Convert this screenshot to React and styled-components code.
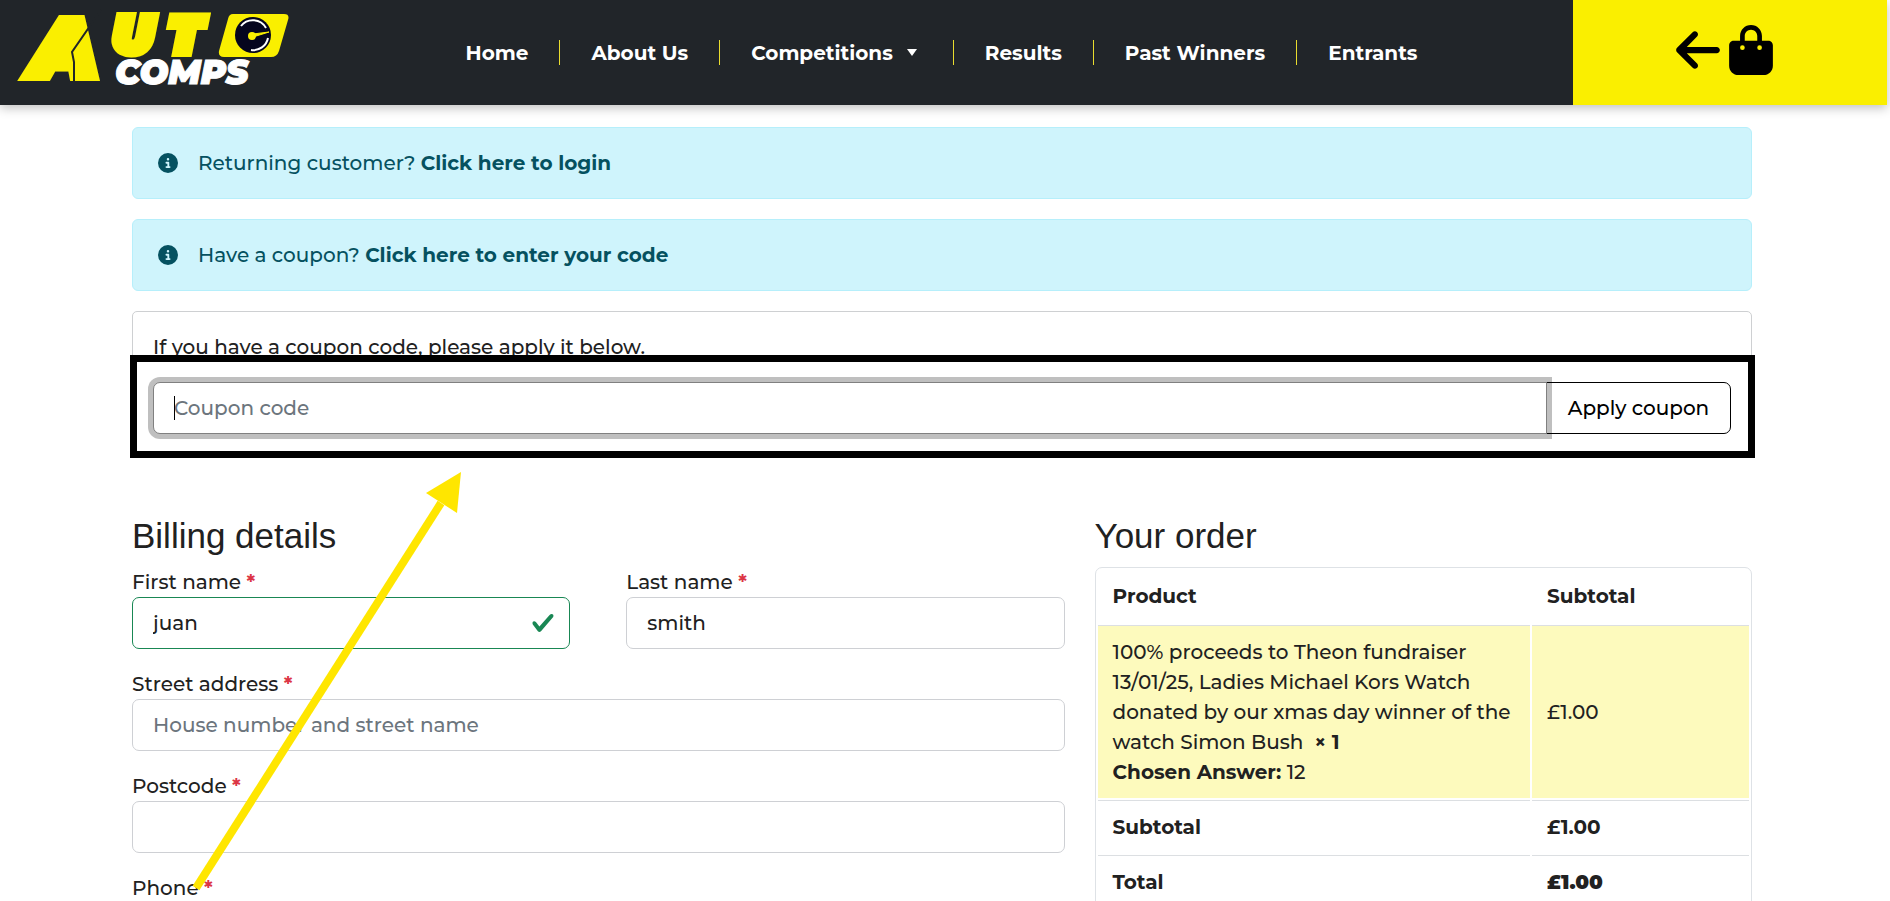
import React from "react";
import styled, { createGlobalStyle } from "styled-components";
import { FaArrowLeft, FaBagShopping, FaCircleInfo } from "react-icons/fa6";

const GlobalStyle = createGlobalStyle`
  *, *::before, *::after { box-sizing: border-box; }
  body {
    margin: 0;
    background: #fff;
    color: #212121;
    font-family: Montserrat, Inter, "Liberation Sans", sans-serif;
    font-size: 20px;
    font-weight: 500;
    line-height: 30px;
  }
  input, button { font: inherit; color: inherit; }
  strong { font-weight: 700; }
`;

const Page = styled.div`
  height: 100vh;
  overflow-x: hidden;
  overflow-y: auto;
  scrollbar-width: none;
`;

const Header = styled.header`
  display: grid;
  grid-template-columns: 1fr 4fr 1fr;
  height: 105px;
  margin-right: 3px;
  background: #212529;
  box-shadow: 0 3px 10px rgba(0, 0, 0, 0.25);
`;

const LogoLink = styled.a`
  display: block;
  svg {
    display: block;
  }
`;

const Nav = styled.nav`
  display: flex;
  align-items: center;
  justify-content: center;
  padding-right: 4px;
`;

const NavLink = styled.a`
  display: flex;
  align-items: center;
  gap: 14px;
  padding: 0 31px;
  height: 25px;
  color: #fff;
  font-weight: 700;
  text-decoration: none;
  white-space: nowrap;
  & + & {
    border-left: 1px solid #e9dc2e;
  }
`;

const Caret = styled.span`
  margin-right: 5px;
  border: 5px solid transparent;
  border-top: 7px solid #fff;
  border-bottom: 0;
`;

const HeaderActions = styled.div`
  display: flex;
  align-items: center;
  justify-content: center;
  gap: 9px;
  padding: 0 10px 5px 0;
  background: #faef00;
`;

const IconLink = styled.a`
  display: block;
  color: #000;
  svg {
    display: block;
    width: 44px;
    height: 50px;
  }
`;

const Main = styled.main`
  padding: 22px 138px 40px 132px;
`;

const Notice = styled.div`
  display: flex;
  align-items: center;
  gap: 20px;
  height: 72px;
  margin-bottom: 20px;
  padding: 0 25px;
  border: 1px solid #b6effb;
  border-radius: 6px;
  background: #cff4fc;
  color: #055160;
  a {
    color: inherit;
    font-weight: 700;
    text-decoration: none;
  }
`;

const CouponForm = styled.form`
  position: relative;
  padding: 20px;
  border: 1px solid #ced0d2;
  border-radius: 5px;
  p {
    margin: 0 0 20px;
  }
`;

const InputGroup = styled.div`
  position: relative;
  display: flex;
`;

const TextInput = styled.input`
  display: block;
  width: 100%;
  height: 52px;
  padding: 0 20px;
  border: 1px solid ${(p) => (p.$valid ? "#198754" : "#ced0d4")};
  border-radius: 7px;
  background: #fff;
  outline: 0;
  &::placeholder {
    color: #6c757d;
    opacity: 1;
  }
`;

const CouponInput = styled(TextInput)`
  position: relative;
  z-index: 1;
  flex: 1;
  min-width: 0;
  border-color: #808080;
  border-radius: 7px 0 0 7px;
  box-shadow: 0 0 0 5px rgba(0, 0, 0, 0.25);
  caret-color: transparent;
`;

const TextCaret = styled.span`
  position: absolute;
  z-index: 2;
  left: 21px;
  top: 14px;
  width: 1px;
  height: 24px;
  background: #000;
`;

const ApplyButton = styled.button`
  width: 185px;
  height: 52px;
  margin-left: -1px;
  padding: 0;
  border: 1px solid #000;
  border-radius: 0 7px 7px 0;
  background: #fff;
  color: #000;
  white-space: nowrap;
`;

const Highlight = styled.div`
  position: absolute;
  z-index: 3;
  inset: 43px -4px -4px -3px;
  border: 7px solid #000;
  pointer-events: none;
`;

const Columns = styled.div`
  display: grid;
  grid-template-columns: repeat(12, 1fr);
  column-gap: 30px;
  margin-top: 60px;
`;

const Billing = styled.section`
  position: relative;
  grid-column: span 7;
`;

const Order = styled.section`
  grid-column: span 5;
`;

const Heading = styled.h3`
  margin: 0 0 10px;
  font-family: "Liberation Sans", Arial, sans-serif;
  font-size: 35px;
  font-weight: 400;
  line-height: 42px;
`;

const FieldRow = styled.div`
  display: grid;
  grid-auto-flow: column;
  grid-auto-columns: 1fr;
  gap: 56px;
  margin-bottom: 20px;
`;

const FieldBox = styled.div`
  position: relative;
  label {
    display: block;
  }
`;

const Required = styled.abbr`
  color: #dc3545;
  font-weight: 700;
`;

const CheckMark = styled.svg`
  position: absolute;
  right: 15px;
  bottom: 14px;
  width: 24px;
  height: 24px;
`;

const Pointer = styled.svg`
  position: absolute;
  left: 60px;
  top: -45px;
  width: 280px;
  height: 430px;
  pointer-events: none;
`;

const OrderTable = styled.table`
  width: 100%;
  border: 1px solid #dee2e6;
  border-radius: 7px;
  border-collapse: separate;
  border-spacing: 2px;
  text-align: left;
  th,
  td {
    padding: 11px 15px;
    border-top: 1px solid #dcdfe2;
  }
  th:last-child,
  td:last-child {
    width: 217px;
  }
  thead th {
    border-top: 0;
    padding-bottom: 12px;
  }
`;

const ItemRow = styled.tr`
  td {
    background: #fdfabd;
  }
`;

const Amount = styled.td`
  font-weight: ${(p) => p.$weight};
`;

function Logo() {
  return (
    <svg width="314" height="105" viewBox="0 0 314 105" role="img" aria-label="Auto Comps">
      <g
        fill="#faef00"
        stroke="#faef00"
        fontFamily="Montserrat, DejaVu Sans, sans-serif"
        fontWeight="900"
        fontStyle="italic"
      >
        <text x="33" y="76" fontSize="78" strokeWidth="11">A</text>
        <text x="113" y="53" fontSize="52" strokeWidth="8">U</text>
        <text x="168" y="53" fontSize="52" strokeWidth="8">T</text>
      </g>
      <path d="M101 10 L72 52 L74 62 L74 83" fill="none" stroke="#212529" strokeWidth="2" />
      <path d="M233 14 H284 Q290 14 288 20 L279 51 Q277 57 271 57 H224 Q218 57 219 51 L228 19 Q229 14 233 14 Z" fill="#faef00" />
      <circle cx="253" cy="35" r="18" fill="#05051e" />
      <path d="M241 26 A15 15 0 0 1 266 28 M268 38 A15 15 0 0 1 251 50" fill="none" stroke="#fff" strokeWidth="2" />
      <path d="M253 34 L269 32 L253 37 Z" fill="#faef00" stroke="#faef00" />
      <circle cx="252" cy="36" r="4" fill="#faef00" />
      <text
        x="115"
        y="84"
        fontSize="34"
        fill="#fff"
        stroke="#fff"
        fontFamily="Montserrat, DejaVu Sans, sans-serif"
        fontWeight="900"
        fontStyle="italic"
      >
        COMPS
      </text>
    </svg>
  );
}

function Field({ id, label, valid, ...rest }) {
  return (
    <FieldBox>
      <label htmlFor={id}>
        {label} <Required>*</Required>
      </label>
      <TextInput id={id} type="text" $valid={valid} {...rest} />
      {valid && (
        <CheckMark viewBox="0 0 8 8" aria-hidden="true">
          <path
            fill="#198754"
            d="M2.3 6.73.6 4.53c-.4-1.04.46-1.4 1.1-.8l1.1 1.4 3.4-3.8c.6-.63 1.6-.27 1.2.7l-4 4.6c-.43.5-.8.4-1.1.1z"
          />
        </CheckMark>
      )}
    </FieldBox>
  );
}

const NAV_ITEMS = ["Home", "About Us", "Competitions", "Results", "Past Winners", "Entrants"];

export default function App() {
  return (
    <Page>
      <GlobalStyle />
      <Header>
        <LogoLink href="#home">
          <Logo />
        </LogoLink>
        <Nav>
          {NAV_ITEMS.map((item) => (
            <NavLink key={item} href="#">
              {item}
              {item === "Competitions" && <Caret />}
            </NavLink>
          ))}
        </Nav>
        <HeaderActions>
          <IconLink href="#back" aria-label="Back">
            <FaArrowLeft />
          </IconLink>
          <IconLink href="#basket" aria-label="Basket">
            <FaBagShopping />
          </IconLink>
        </HeaderActions>
      </Header>

      <Main>
        <Notice>
          <FaCircleInfo />
          <span>
            Returning customer? <a href="#login">Click here to login</a>
          </span>
        </Notice>
        <Notice>
          <FaCircleInfo />
          <span>
            Have a coupon? <a href="#coupon">Click here to enter your code</a>
          </span>
        </Notice>

        <CouponForm id="coupon">
          <p>If you have a coupon code, please apply it below.</p>
          <InputGroup>
            <CouponInput type="text" placeholder="Coupon code" aria-label="Coupon code" />
            <TextCaret />
            <ApplyButton type="button">Apply coupon</ApplyButton>
          </InputGroup>
          <Highlight />
        </CouponForm>

        <Columns>
          <Billing>
            <Heading>Billing details</Heading>
            <FieldRow>
              <Field id="first-name" label="First name" defaultValue="juan" valid />
              <Field id="last-name" label="Last name" defaultValue="smith" />
            </FieldRow>
            <FieldRow>
              <Field id="street" label="Street address" placeholder="House number and street name" />
            </FieldRow>
            <FieldRow>
              <Field id="postcode" label="Postcode" />
            </FieldRow>
            <FieldRow>
              <Field id="phone" label="Phone" />
            </FieldRow>
            <Pointer viewBox="0 0 280 430" aria-hidden="true">
              <path d="M4 418 L249 33" stroke="#ffe600" strokeWidth="8" />
              <path d="M269 2 L234 23 L265 43 Z" fill="#ffe600" />
            </Pointer>
          </Billing>

          <Order>
            <Heading>Your order</Heading>
            <OrderTable>
              <thead>
                <tr>
                  <th>Product</th>
                  <th>Subtotal</th>
                </tr>
              </thead>
              <tbody>
                <ItemRow>
                  <td>
                    100% proceeds to Theon fundraiser 13/01/25, Ladies Michael Kors Watch donated by
                    our xmas day winner of the watch Simon Bush &nbsp;<strong>×&nbsp;1</strong>
                    <br />
                    <strong>Chosen Answer:</strong> 12
                  </td>
                  <td>£1.00</td>
                </ItemRow>
              </tbody>
              <tfoot>
                <tr>
                  <th>Subtotal</th>
                  <Amount $weight={700}>£1.00</Amount>
                </tr>
                <tr>
                  <th>Total</th>
                  <Amount $weight={900}>£1.00</Amount>
                </tr>
              </tfoot>
            </OrderTable>
          </Order>
        </Columns>
      </Main>
    </Page>
  );
}
